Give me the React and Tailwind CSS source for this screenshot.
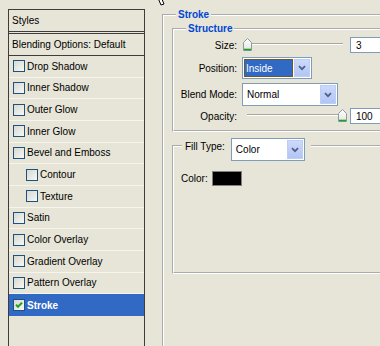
import React from 'react';

const rows = [
  { label: 'Drop Shadow' },
  { label: 'Inner Shadow' },
  { label: 'Outer Glow' },
  { label: 'Inner Glow' },
  { label: 'Bevel and Emboss' },
  { label: 'Contour', indent: true },
  { label: 'Texture', indent: true },
  { label: 'Satin' },
  { label: 'Color Overlay' },
  { label: 'Gradient Overlay' },
  { label: 'Pattern Overlay' },
  { label: 'Stroke', checked: true },
];

const Checkbox = ({ checked }) => (
  <span className="w-[12px] h-[12px] shrink-0 border border-[#1c5180] bg-linear-to-br from-[#d9d9d2] to-[#f7f7f4] flex items-center justify-center">
    {checked && (
      <svg width="8" height="8" viewBox="0 0 8 8">
        <path d="M1 3.8 L3 5.8 L7 1.6" fill="none" stroke="#21a121" strokeWidth="2" />
      </svg>
    )}
  </span>
);

const ArrowBtn = () => (
  <span className="w-[16px] h-full shrink-0 bg-linear-to-b from-[#cdd9fc] to-[#b2c5f5] border border-[#bccdf6] flex items-center justify-center">
    <svg width="8" height="6" viewBox="0 0 8 6">
      <path d="M1 1.2 L4 4.2 L7 1.2" fill="none" stroke="#4d6185" strokeWidth="1.8" />
    </svg>
  </span>
);

const Select = ({ value, w, h, active }) => (
  <div className={`${w} ${h} border border-[#7f9db9] bg-white flex p-px gap-px`}>
    {active ? (
      <span className="flex-1 bg-[#316ac5] border border-[#6b5a2a] text-white flex items-center pl-px">{value}</span>
    ) : (
      <span className="flex-1 flex items-center pl-[3px] text-black">{value}</span>
    )}
    <ArrowBtn />
  </div>
);

const Thumb = () => (
  <svg width="9" height="13" viewBox="0 0 9 13">
    <defs>
      <linearGradient id="tg" x1="0" y1="0" x2="0" y2="1">
        <stop offset="0" stopColor="#ffffff" />
        <stop offset="1" stopColor="#e3e6de" />
      </linearGradient>
    </defs>
    <path d="M0.5 4.5 L4.5 0.5 L8.5 4.5 V12.5 H0.5 Z" fill="url(#tg)" stroke="#8b9aa6" />
    <path d="M1 11.5 H8" stroke="#21a121" strokeWidth="1.6" />
  </svg>
);

const Slider = ({ end }) => (
  <div className="relative w-[104px] h-[16px] ml-px">
    <div className="absolute left-[4px] right-[4px] top-[6px] h-[2px] border-t border-[#a7a79d] border-b border-b-white" />
    <div className={`absolute top-[1px] ${end ? 'right-0' : 'left-0'}`}>
      <Thumb />
    </div>
  </div>
);

const NumInput = ({ value }) => (
  <div className="ml-[3px] w-[40px] h-[16px] border border-[#7f9db9] bg-white pl-[5px] flex items-center text-black">{value}</div>
);

const Row = ({ label, children, className = '' }) => (
  <div className={`flex items-center ${className}`}>
    <span className="w-[63px] text-right text-black">{label}</span>
    <div className="ml-[5px] flex items-center">{children}</div>
  </div>
);

export default function App() {
  return (
    <div className="relative w-[380px] h-[346px] overflow-hidden bg-[#e6e5d7] flex font-['Liberation_Sans',Arial,sans-serif] text-[10px] text-black">
      {/* cursor tail */}
      <svg className="absolute left-[152px] top-[-10px]" width="18" height="16" viewBox="0 0 18 16">
        <path d="M2 1 L2 4 L6 8 L9 15 L12 14 L9 7 L13 6 Z" fill="#fff" stroke="#000" strokeWidth="1" />
      </svg>

      {/* Styles list */}
      <div className="ml-[8px] mt-[9px] w-[137px] h-[360px] shrink-0 border border-[#3d3d3d] flex flex-col">
        <div className="h-[24px] pl-[3px] pb-px flex items-center border-b-[3px] border-double border-[#3d3d3d]">Styles</div>
        <div className="h-[22px] pl-[3px] flex items-center border-b border-[#3d3d3d]">Blending Options: Default</div>
        {rows.map((r) => (
          <div
            key={r.label}
            className={`h-[21.67px] shrink-0 flex items-center gap-[2px] ${r.indent ? 'pl-[17px]' : 'pl-[4px]'} ${
              r.checked ? 'bg-[#316ac5] text-white font-bold' : 'border-b border-[#f5f4ed]'
            }`}
          >
            <Checkbox checked={r.checked} />
            <span>{r.label}</span>
          </div>
        ))}
      </div>

      {/* Stroke settings */}
      <div className="pt-[8px] ml-[17px]">
        <fieldset className="[border:2px_groove_#fff] w-[240px] h-[400px] pl-[8px]">
          <legend className="ml-[4px] px-[2px] leading-[14px] font-bold text-[#0046d5]">Stroke</legend>

          <fieldset className="[border:2px_groove_#fff] pb-[6px]">
            <legend className="ml-[12px] px-[2px] leading-[14px] font-bold text-[#0046d5]">Structure</legend>
            <Row label="Size:" className="mt-px h-[16px]">
              <Slider />
              <NumInput value="3" />
            </Row>
            <Row label="Position:" className="mt-[4px] h-[22px]">
              <Select value="Inside" w="w-[70px]" h="h-[22px]" active />
            </Row>
            <Row label="Blend Mode:" className="mt-[4px] h-[23px]">
              <Select value="Normal" w="w-[96px]" h="h-[23px]" />
            </Row>
            <Row label="Opacity:" className="mt-[2px] h-[16px]">
              <Slider end />
              <NumInput value="100" />
            </Row>
          </fieldset>

          <fieldset className="[border:2px_groove_#fff] mt-[6px] h-[136px] pl-[7px]">
            <legend className="ml-px pl-[3px] pr-[6px] h-[16px] flex items-start">
              <span className="mt-[2px] leading-[14px]">Fill Type:</span>
              <div className="ml-[6px]">
                <Select value="Color" w="w-[74px]" h="h-[23px]" />
              </div>
            </legend>
            <div className="mt-[17px] flex items-center h-[15px]">
              <span>Color:</span>
              <span className="ml-[4px] w-[30px] h-[15px] bg-black border border-[#808080]" />
            </div>
          </fieldset>
        </fieldset>
      </div>
    </div>
  );
}
